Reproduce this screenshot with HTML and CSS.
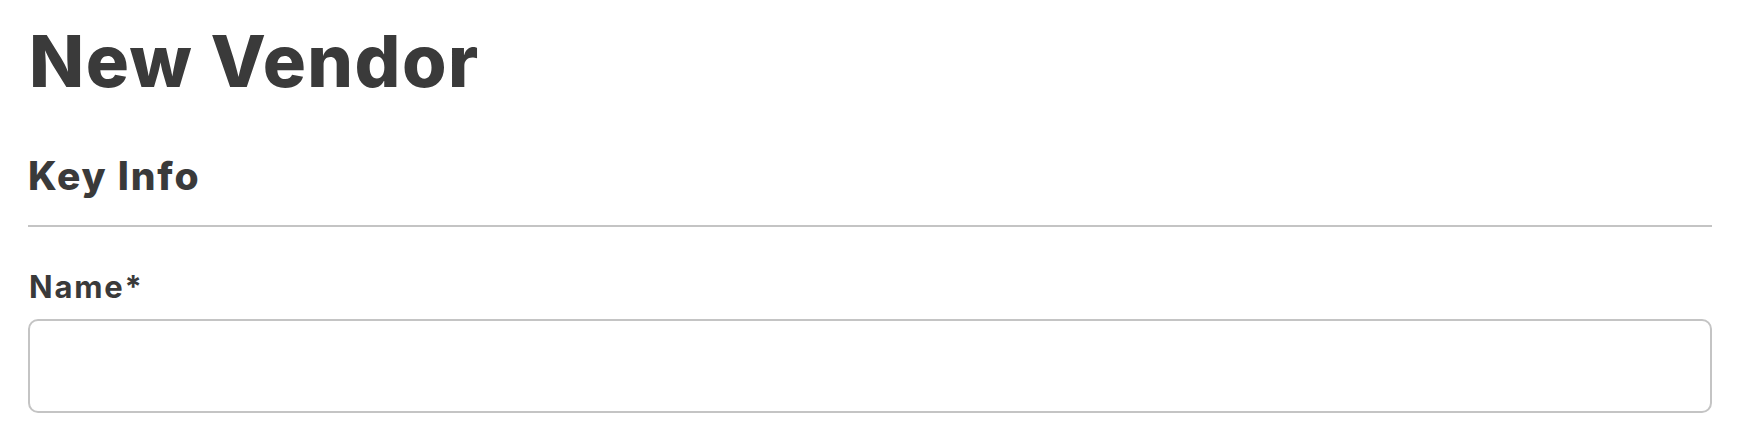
FILE: index.html
```html
<!DOCTYPE html>
<html lang="en">
<head>
<meta charset="utf-8">
<title>New Vendor</title>
<link rel="stylesheet" href="styles.css">
</head>
<body>
<main class="page">
  <h1 class="page-title">New Vendor</h1>
  <section class="section">
    <h2 class="section-title">Key Info</h2>
    <div class="field">
      <label class="field-label" for="vendor-name">Name*</label>
      <input class="field-input" id="vendor-name" type="text">
    </div>
  </section>
</main>
</body>
</html>
```

FILE: styles.css
```css
html, body {
  margin: 0;
  padding: 0;
  background: #ffffff;
}

body {
  font-family: "Inter", "Liberation Sans", sans-serif;
  color: #3a3a3a;
}

.page {
  padding: 23px 26px 0 28px;
}

.page-title {
  margin: 0;
  font-size: 72px;
  line-height: 75px;
  font-weight: 800;
  letter-spacing: 1.5px;
  padding-left: 1px;
}

.section {
  margin-top: 58px;
}

.section-title {
  margin: 0;
  font-size: 39px;
  line-height: 39px;
  font-weight: 800;
  letter-spacing: 1.8px;
  padding-bottom: 30px;
  border-bottom: 2px solid #c4c4c4;
}

.field {
  display: flex;
  flex-direction: column;
  padding-top: 44px;
}

.field-label {
  font-size: 31px;
  line-height: 31px;
  font-weight: 700;
  letter-spacing: 1.8px;
  padding-left: 1px;
  margin-bottom: 17px;
}

.field-input {
  box-sizing: border-box;
  width: 100%;
  height: 94px;
  margin: 0;
  border: 2px solid #c4c4c4;
  border-radius: 10px;
  background: #ffffff;
  font: inherit;
  font-size: 28px;
  padding: 0 20px;
  outline: none;
}
```
